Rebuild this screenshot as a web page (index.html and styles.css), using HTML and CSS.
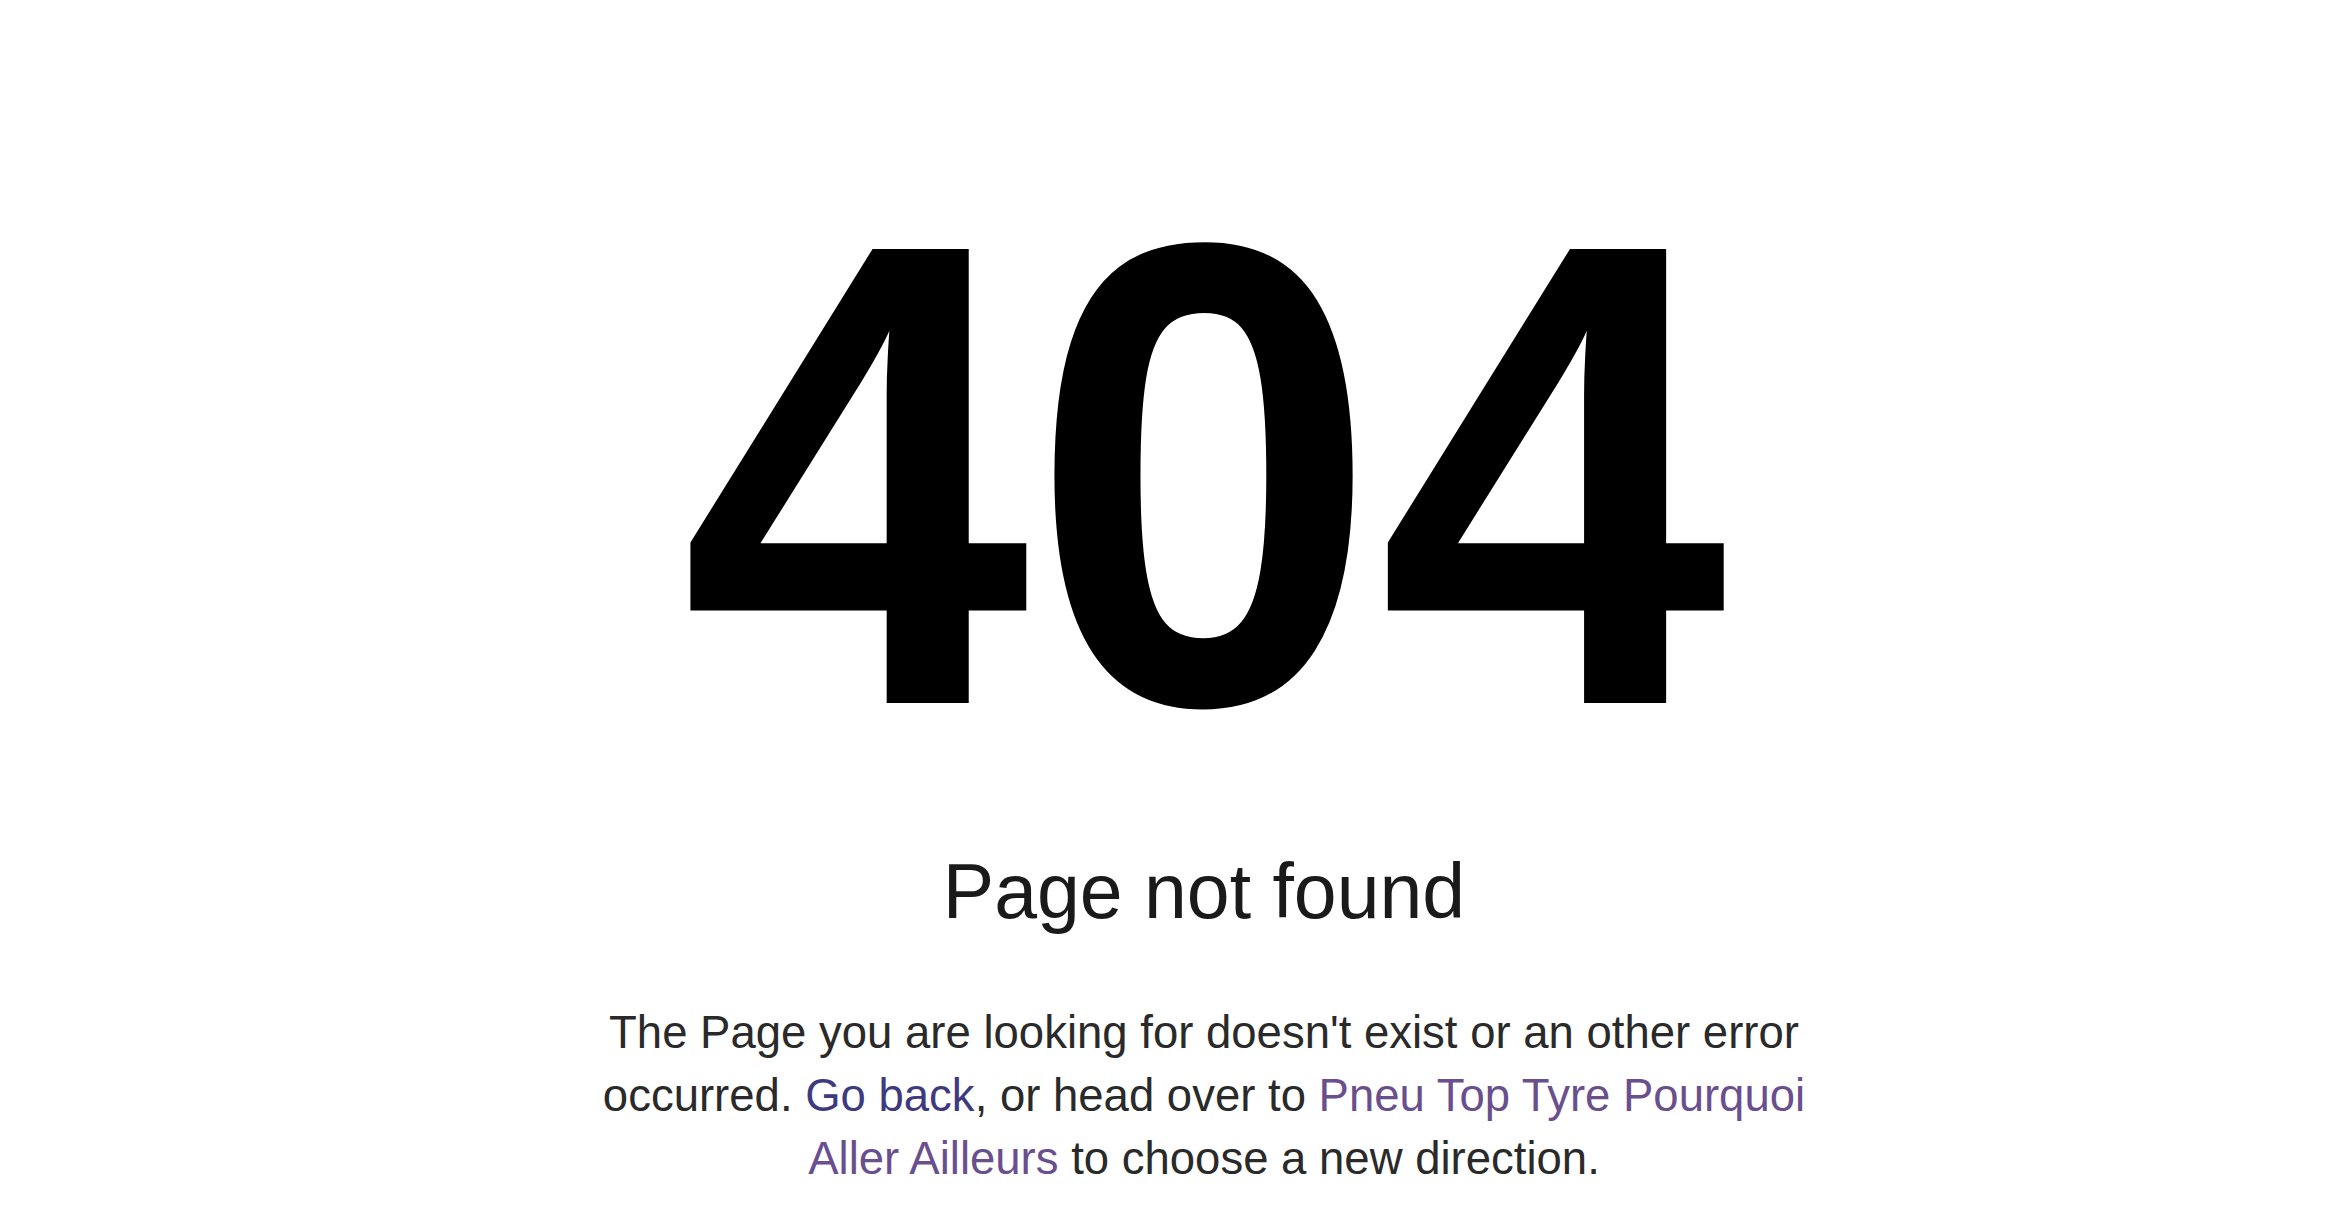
FILE: index.html
```html
<!DOCTYPE html>
<html lang="en">
<head>
    <meta charset="UTF-8">
    <meta name="viewport" content="width=device-width, initial-scale=1.0">
    <title>Page not found</title>
    <link rel="stylesheet" href="styles.css">
</head>
<body>
    <div class="error-page">
        <h1 class="error-code">404</h1>
        <h2 class="error-title">Page not found</h2>
        <p class="error-text">
            The Page you are looking for doesn't exist or an other error occurred.
            <a href="#" class="link-back">Go back</a>, or head over to
            <a href="#" class="link-home">Pneu Top Tyre Pourquoi Aller Ailleurs</a>
            to choose a new direction.
        </p>
    </div>
</body>
</html>
```

FILE: styles.css
```css
body {
    margin: 0;
    font-family: "Liberation Sans", Arial, sans-serif;
    background-color: #ffffff;
    color: #222;
}
.error-page {
    padding: 145px 0 0 58px;
    text-align: center;
}
.error-code {
    margin: 0;
    font-size: 660px;
    font-weight: bold;
    line-height: 1;
    color: #000;
    transform: scaleX(0.95);
}
.error-title {
    margin: 40px 0 0;
    font-size: 77px;
    font-weight: normal;
    line-height: 1.2;
    color: #1a1a1a;
}
.error-text {
    max-width: 1250px;
    margin: 64px auto 0;
    font-size: 45.5px;
    line-height: 63px;
    color: #2a2a2a;
}
.error-text a {
    text-decoration: none;
}
.link-back {
    color: #3e3a80;
}
.link-home {
    color: #6a4f8f;
}
```
